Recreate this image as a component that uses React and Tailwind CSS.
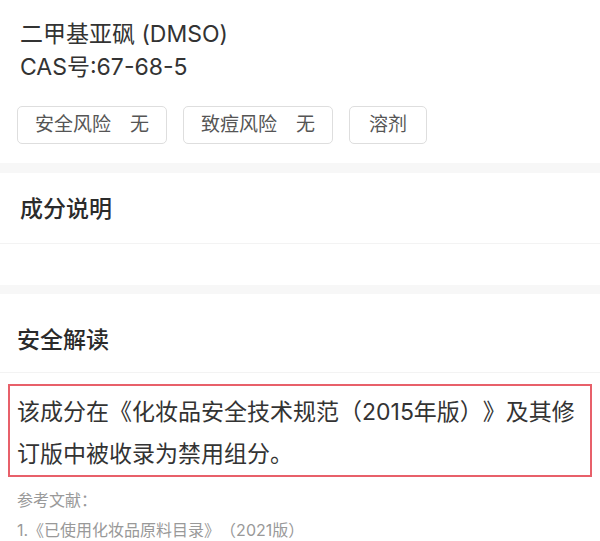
import React from "react";

const tags = [
  { label: "安全风险", value: "无" },
  { label: "致痘风险", value: "无" },
  { label: "溶剂" },
];

const font = {
  fontFamily: 'Inter, "Noto Sans CJK SC", sans-serif',
};

const App = () => {
  return (
    <div
      className="w-[600px] h-[541px] overflow-hidden bg-white text-[#333] [text-spacing-trim:space-all]"
      style={font}
    >

      {/* HEADER */}

      <div className="px-5 pt-[18px] pb-[19px]">

        <h1 className="text-[23px] leading-[33px]">
          二甲基亚砜 (DMSO)
        </h1>

        <p className="text-[23px] leading-[33px]">
          CAS号:67-68-5
        </p>

        <div className="mt-[22px] -ml-[3px] flex gap-4">
          {tags.map((tag) => (
            <div
              key={tag.label}
              className={`h-[38px] rounded-[5px] border border-[#dedede] flex items-center gap-[19px] text-[19px] text-[#555] ${
                tag.value ? "px-[17px]" : "px-[19px]"
              }`}
            >
              <span>{tag.label}</span>
              {tag.value && <span>{tag.value}</span>}
            </div>
          ))}
        </div>

      </div>

      <div className="h-[10px] bg-[#f7f7f7]" />

      {/* 成分说明 */}

      <div className="bg-white">
        <div className="h-[71px] px-5 flex items-center border-b border-[#f3f3f3]">
          <h2 className="text-[23px] font-medium text-[#2b2b2b] pt-[2px]">成分说明</h2>
        </div>
        <div className="h-[41px]" />
      </div>

      <div className="h-[9px] bg-[#f7f7f7]" />

      {/* 安全解读 */}

      <div className="bg-white">
        <div className="h-[79px] px-[17px] flex items-center border-b border-[#f3f3f3]">
          <h2 className="text-[23px] font-medium text-[#2b2b2b] pt-[14px]">安全解读</h2>
        </div>

        <div className="mx-2 mt-[11px] border-2 border-[#e8606a] pl-[7px] pt-[5px] pb-0">
          <p className="text-[23px] leading-[42px] text-[#333]">
            该成分在《化妆品安全技术规范（2015年版）》及其修订版中被收录为禁用组分。
          </p>
        </div>

        <div className="px-[17px] pt-[8px] text-[16px] text-[#999]">
          <p className="leading-[30px]">参考文献：</p>
          <p className="leading-[30px]">1.《已使用化妆品原料目录》（2021版）</p>
        </div>
      </div>

    </div>
  );
};

export default App;
